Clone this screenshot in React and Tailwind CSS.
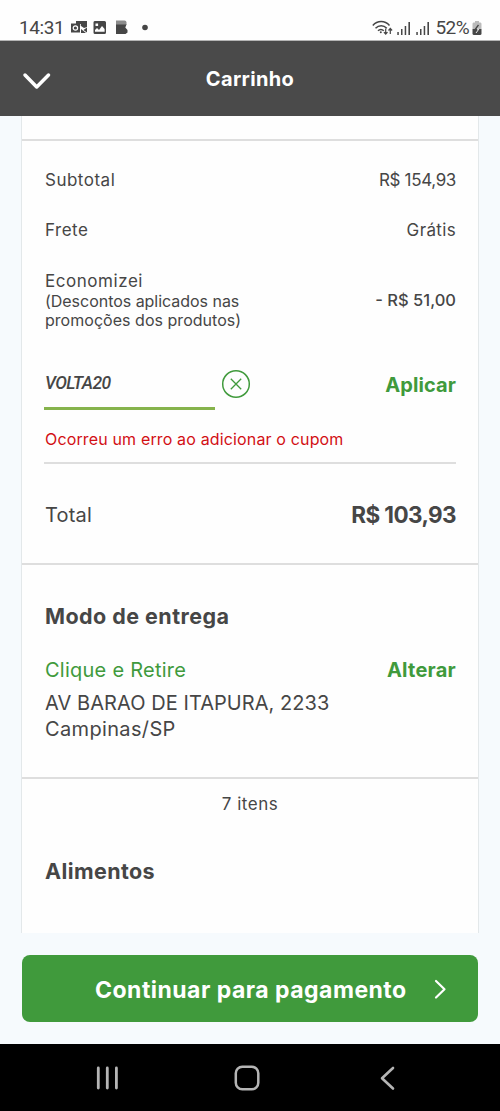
import React from "react";

const NotificationIcons = () => (
  <svg width="78" height="16" viewBox="0 0 78 16" fill="#464646">
    {/* outlook */}
    <path d="M5 1h11v6l-3 1-3-2H5z" />
    <path d="M0 3.500h9v9H0z" />
    <circle cx="4.400" cy="8" r="2.200" fill="none" stroke="#fff" strokeWidth="1.200" />
    <path d="M9.500 4v9" stroke="#fff" strokeWidth=".8" />
    <path d="M10 9l5 4H10zM16 7.500v5L12.500 10z" />
    {/* gallery */}
    <path fillRule="evenodd" d="M24.500 1h9a1.500 1.500 0 0 1 1.500 1.500v10a1.500 1.500 0 0 1-1.500 1.500h-9.500a1.500 1.500 0 0 1-1.500-1.500v-10A1.500 1.500 0 0 1 24.500 1zM24 11.800h9.600V9l-2.600-3-3 4-2-2-2 2zM24.500 3.500v2.600h2.600V3.500z" />
    {/* app badge */}
    <path d="M45 .500h8.500a2 2 0 0 1 2 2v2.500H45z" fill="#8c8c8c" />
    <path d="M45 4.500h10.500l-1.200 3 2.200 2.500v2.500L54.500 14H45z" />
    <circle cx="74" cy="7.500" r="2.800" />
  </svg>
);

const WifiIcon = () => (
  <svg width="21" height="16" viewBox="0 0 21 16" fill="none" stroke="#464646" strokeWidth="1.5">
    <path d="M.8 5.500C5.500.3 12.800.3 17.500 5.500M3.500 8.200c3.400-3.400 8-3.400 11.300 0M6 10.800c1.800-1.800 4-1.800 5.800 0" />
    <circle cx="8.800" cy="12.300" r="1" fill="#464646" stroke="none" />
    <path d="M13.700 8.500v5.500M11.900 12.200l1.800 2 1.800-2M18.300 14V8.700M16.500 10.500l1.800-2 1.800 2" strokeWidth="1.200" />
  </svg>
);

const SignalIcon = () => (
  <svg width="14" height="15" viewBox="0 0 14 15" fill="#464646">
    <path d="M.3 11h1.500v3H.3zM4 8h1.500v6H4zM7.700 5h1.500v9H7.700zM11.400 1H13v13h-1.600z" />
  </svg>
);

const BatteryIcon = () => (
  <svg width="10" height="15" viewBox="0 0 10 15">
    <path d="M3 0h4v1.500h1.500Q9.500 1.500 9.500 3v5h-9V3Q.5 1.500 1.500 1.500H3z" fill="#bbb" />
    <path d="M.5 8h9v4.500q0 1.500-1.500 1.500H2Q.5 14 .5 12.500z" fill="#464646" />
    <path d="M6.500 4L3 8.500h1.800" fill="none" stroke="#464646" strokeWidth="1.300" />
    <path d="M5 8.200h1.800L4 12" fill="none" stroke="#eee" strokeWidth="1" />
  </svg>
);

function StatusBar() {
  return (
    <div className="flex h-[41px] items-center bg-[#fefefe] pl-[19px] pr-[18px] pt-[16px] font-['Roboto',sans-serif] text-[19px] text-[#464646] border-b border-[#b5b5b5]">
      <span className="w-[52px] tracking-[-0.4px]">14:31</span>
      <NotificationIcons />
      <div className="ml-auto flex items-center">
        <WifiIcon />
        <span className="ml-[4px]"><SignalIcon /></span>
        <span className="ml-[5px]"><SignalIcon /></span>
        <span className="ml-[6px] tracking-[-0.6px]">52%</span>
        <span className="ml-[3px]"><BatteryIcon /></span>
      </div>
    </div>
  );
}

function Header() {
  return (
    <header className="relative flex h-[75px] items-center justify-center bg-[#4a4a4a]">
      <svg className="absolute left-[22px] top-[30px]" width="30" height="20" viewBox="0 0 30 20" fill="none" stroke="#fff" strokeWidth="3.500" strokeLinecap="round" strokeLinejoin="round">
        <path d="M3 4l11.700 12L26.500 4" />
      </svg>
      <h1 className="text-[20px] font-bold tracking-[0.35px] text-white">Carrinho</h1>
    </header>
  );
}

function Summary() {
  return (
    <section className="h-[424px] border-b-2 border-[#dedede] px-[22px] pt-[15px] text-[17px]">
      <div className="flex h-[50px] items-center justify-between pl-px">
        <span className="tracking-[0.5px]">Subtotal</span>
        <span className="tracking-[-0.35px]">R$ 154,93</span>
      </div>
      <div className="flex h-[50px] items-center justify-between pl-px">
        <span className="tracking-[0.5px]">Frete</span>
        <span className="tracking-[0.35px]">Grátis</span>
      </div>
      <div className="flex h-[88px] items-center justify-between pl-px">
        <div className="flex flex-col">
          <span className="leading-[22px] tracking-[0.55px]">Economizei</span>
          <span className="text-[16px] leading-[19px] tracking-[-0.03px]">(Descontos aplicados nas</span>
          <span className="text-[16px] leading-[19px] tracking-[0.03px]">promoções dos produtos)</span>
        </div>
        <span className="text-[16.500px] font-medium">- R$ 51,00</span>
      </div>

      <div className="flex h-[66px] items-start">
        <div className="flex h-[66px] w-[171px] items-center border-b-[3px] border-[#86b34c] pl-px pt-[15px] font-['Roboto',sans-serif] text-[17.500px] font-medium italic tracking-[-0.6px]">
          <span>VOLTA20</span>
        </div>
        <svg className="ml-[6px] mt-[25px]" width="30" height="30" viewBox="0 0 30 30" fill="none" stroke="#409a3c" strokeWidth="1.500">
          <circle cx="15" cy="15" r="13.300" />
          <path d="M9.800 9.800l10.400 10.400M20.200 9.800L9.800 20.200" strokeWidth="1.300" />
        </svg>
        <button className="ml-auto mt-[28px] h-[26px] text-[20px] font-bold leading-[26px] tracking-[0.1px] text-[#409a3c]">Aplicar</button>
      </div>

      <div className="flex h-[54px] items-center border-b-2 border-[#dedede] pl-px pt-[6px] text-[16px] tracking-[0.15px] text-[#d20f14]">
        <span>Ocorreu um erro ao adicionar o cupom</span>
      </div>
      <div className="flex h-[99px] items-center justify-between pl-px pt-[2px]">
        <span className="text-[20px] tracking-[0.2px]">Total</span>
        <span className="text-[22.500px] font-bold tracking-[-0.6px]">R$ 103,93</span>
      </div>
    </section>
  );
}

function Delivery() {
  return (
    <section className="h-[214px] border-b-2 border-[#dedede] pl-[23px] pr-[22px] pt-[38px] text-[20px]">
      <h2 className="text-[21.500px] font-bold leading-[26px] tracking-[0.45px]">Modo de entrega</h2>
      <div className="mt-[28px] flex h-[26px] items-center justify-between text-[#409a3c]">
        <span className="tracking-[0.25px]">Clique e Retire</span>
        <button className="font-bold tracking-[0.25px]">Alterar</button>
      </div>
      <div className="mt-[7px] flex flex-col leading-[26px]">
        <span className="tracking-[0.06px]">AV BARAO DE ITAPURA, 2233</span>
        <span className="tracking-[0.35px]">Campinas/SP</span>
      </div>
    </section>
  );
}

function Items() {
  return (
    <section className="px-[22px] pt-[13px]">
      <p className="text-center text-[17px] leading-[24px] tracking-[0.5px]">7 itens</p>
      <h2 className="mt-[42px] pl-px text-[21.500px] font-bold leading-[26px] tracking-[0.4px]">Alimentos</h2>
    </section>
  );
}

function NavBar() {
  return (
    <nav className="flex h-[67px] items-center justify-between bg-black pl-[94px] pr-[100px] text-[#b5b5b5]">
      <svg width="26" height="26" viewBox="0 0 26 26" stroke="currentColor" strokeWidth="2.800" strokeLinecap="round">
        <path d="M4.300 3v20M13.300 3v20M22.400 3v20" />
      </svg>
      <svg width="26" height="26" viewBox="0 0 26 26" fill="none" stroke="currentColor" strokeWidth="2.500">
        <rect x="1.800" y="1.800" width="22.500" height="22.500" rx="6.500" />
      </svg>
      <svg width="26" height="26" viewBox="0 0 26 26" fill="none" stroke="currentColor" strokeWidth="2.600" strokeLinecap="round" strokeLinejoin="round">
        <path d="M19 3L8 13.200 19 23.500" />
      </svg>
    </nav>
  );
}

export default function App() {
  return (
    <div className="flex h-[1111px] w-[500px] flex-col overflow-hidden bg-[#f6fafd] font-['Inter',sans-serif] text-[#464646]">
      <StatusBar />
      <Header />
      <main className="mx-[22px] h-[817px] bg-[#fefefe] shadow-[0_0_0_1px_#e3e8ea]">
        <div className="h-[25px] border-b-2 border-[#dedede]" />
        <Summary />
        <Delivery />
        <Items />
      </main>
      <footer className="relative h-[111px] bg-[#f6fafd] px-[22px] pt-[22px]">
        <button className="flex h-[67px] w-full items-center rounded-[8px] bg-[#409a3c] pl-[73px] pr-[30px] text-[23px] font-bold text-white">
          <span className="whitespace-nowrap pt-[3px] tracking-[0.48px]">Continuar para pagamento</span>
          <svg className="ml-auto" width="16" height="22" viewBox="0 0 16 22" fill="none" stroke="#fff" strokeWidth="2.200" strokeLinecap="round" strokeLinejoin="round">
            <path d="M4 3l8.500 8.300L4 19.500" />
          </svg>
        </button>
      </footer>
      <NavBar />
    </div>
  );
}
